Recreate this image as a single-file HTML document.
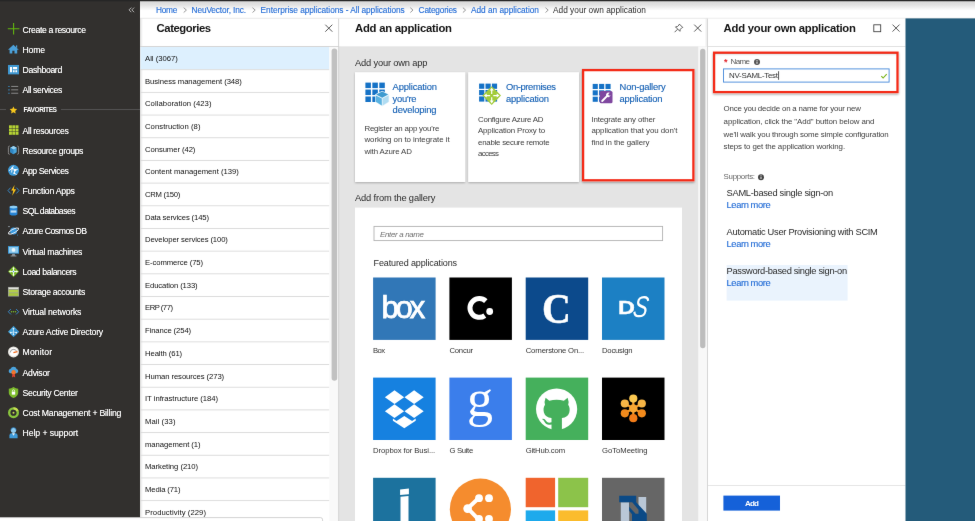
<!DOCTYPE html>
<html lang="en"><head><meta charset="utf-8"><title>Add your own application</title>
<style>
*{box-sizing:border-box;margin:0;padding:0}
html,body{width:975px;height:521px;overflow:hidden;background:#fff}
body{position:relative;font-family:"Liberation Sans",sans-serif;color:#333}
#app{position:absolute;left:0;top:0;width:975px;height:521px;overflow:hidden;background:#fff;will-change:transform;filter:url(#bl)}
#g{position:absolute;left:0;top:0}
.t{position:absolute;white-space:nowrap;display:block}
.sb{color:#fff;text-shadow:0 0 .5px rgba(255,255,255,.7)}
.fav{color:#fff;font-weight:bold}
.bc{color:#236cd6}
.dk{color:#2b2b2b}
.h{font-weight:bold;color:#141414}
.lt{color:#111}
.ct{color:#1560b4}
.cd{color:#404040}
.sec{color:#2a2a2a}
.lk{color:#236cd6}
.gl{color:#333}
.w{color:#fff}
.sf{font-family:"Liberation Serif",serif}
.bc,.lk,.ct{-webkit-text-stroke:.12px currentColor}
</style></head>
<body>
<div id="app">
<svg id="g" width="975" height="521" viewBox="0 0 975 521">
<defs><filter id="bl" x="0" y="0" width="100%" height="100%" color-interpolation-filters="sRGB"><feConvolveMatrix order="3" kernelMatrix="1 16 1 16 300 16 1 16 1" divisor="368" edgeMode="duplicate" preserveAlpha="true"/></filter><linearGradient id="cg" x1="0" y1="0" x2="0" y2="1"><stop offset="0" stop-color="#f2f2f2"/><stop offset=".06" stop-color="#dadada"/><stop offset=".22" stop-color="#e2e2e2"/><stop offset=".55" stop-color="#fff"/><stop offset="1" stop-color="#fff"/></linearGradient><linearGradient id="lsh" x1="0" y1="0" x2="1" y2="0"><stop offset="0" stop-color="#000" stop-opacity=".12"/><stop offset="1" stop-color="#000" stop-opacity="0"/></linearGradient><linearGradient id="rsh" x1="0" y1="0" x2="1" y2="0"><stop offset="0" stop-color="#000" stop-opacity="0"/><stop offset="1" stop-color="#000" stop-opacity=".09"/></linearGradient><linearGradient id="ish" x1="0" y1="0" x2="0" y2="1"><stop offset="0" stop-color="#000" stop-opacity=".13"/><stop offset="1" stop-color="#000" stop-opacity="0"/></linearGradient><filter id="sh" x="-10%" y="-10%" width="120%" height="125%"><feDropShadow dx="0" dy="1" stdDeviation=".9" flood-color="#000" flood-opacity=".26"/></filter><filter id="sh2" x="-10%" y="-10%" width="120%" height="125%"><feDropShadow dx="0" dy="1.2" stdDeviation="1.1" flood-color="#000" flood-opacity=".38"/></filter></defs>
<rect x="140" y="1" width="835" height="17.6" fill="url(#cg)"/>
<rect x="140" y="17.8" width="835" height="0.9" fill="#e6e6e6"/>
<rect x="0" y="0" width="140" height="521" fill="#32302e"/>
<rect x="0" y="0" width="975" height="1.3" fill="#262626"/>
<rect x="0" y="109" width="6" height="0.8" fill="#5a5a5a"/>
<rect x="61" y="109" width="79" height="0.8" fill="#5a5a5a"/>
<g transform="translate(8 22.9)"><path d="M5.6 0v11.6M-.2 5.8h11.6" stroke="#62b50f" stroke-width="1.1" fill="none"/></g>
<g transform="translate(8 44.08)"><path d="M5.4.6 10.8 5.6H9.2V9.4H6.5V6.6H4.3V9.4H1.6V5.6H0Z" fill="#4ba0d8"/><rect x="8" y="1.3" width="1.2" height="2.4" fill="#4ba0d8"/></g>
<g transform="translate(8 64.06)"><rect x="0" y=".9" width="11" height="9.4" fill="#3f98d2"/><path d="M2 2.9h2v5.4H2zM4.9 2.9h4.2v2.3H4.9zM4.9 6.1h1.7v2.2H4.9zM7.4 6.1h1.7v2.2H7.4z" fill="#fff"/></g>
<g transform="translate(8 84.24)"><path d="M.3 2.2h1.3M.3 5.6h1.3M.3 9h1.3" stroke="#3a8fc8" stroke-width="1.1"/><path d="M3.2 2.2h7M3.2 5.6h7M3.2 9h7" stroke="#8a8a8a" stroke-width="1"/></g>
<g transform="translate(8 104.52)"><path d="M5.4 1.9 6.5 4.3 9.1 4.6 7.2 6.4 7.7 9 5.4 7.7 3.1 9 3.6 6.4 1.7 4.6 4.3 4.3Z" fill="#f6c61c"/></g>
<g transform="translate(8 124.5)"><rect x="1.0" y="0.8" width="2.9" height="2.9" fill="#b5d334"/><rect x="4.3" y="0.8" width="2.9" height="2.9" fill="#b5d334"/><rect x="7.6" y="0.8" width="2.9" height="2.9" fill="#b5d334"/><rect x="1.0" y="4.1" width="2.9" height="2.9" fill="#b5d334"/><rect x="4.3" y="4.1" width="2.9" height="2.9" fill="#b5d334"/><rect x="7.6" y="4.1" width="2.9" height="2.9" fill="#b5d334"/><rect x="1.0" y="7.4" width="2.9" height="2.9" fill="#b5d334"/><rect x="4.3" y="7.4" width="2.9" height="2.9" fill="#b5d334"/><rect x="7.6" y="7.4" width="2.9" height="2.9" fill="#b5d334"/></g>
<g transform="translate(8 144.68)"><path d="M1.7 1.3Q.2 1.3.4 3V8Q.2 9.7 1.7 9.7M9.3 1.3Q10.8 1.3 10.6 3V8Q10.8 9.7 9.3 9.7" fill="none" stroke="#9a9a9a" stroke-width=".8"/><path d="M5.5 1.4 8.7 3.1V7.6L5.5 9.5 2.3 7.6V3.1Z" fill="#49a5dc"/><path d="M5.5 1.4 8.7 3.1 5.5 4.9 2.3 3.1Z" fill="#9bd3f2"/><path d="M5.5 4.9V9.5L2.3 7.6V3.1Z" fill="#2f86c4"/></g>
<g transform="translate(8 164.86)"><circle cx="5.5" cy="5.5" r="5.5" fill="#3d9bd9"/><path d="M1 5.8 4.2 3.4 5.4 1M4.2 3.4 7 5.2 9.8 4.4M7 5.2 6.2 8.4 8.6 9.6M4.2 3.4 3.6 7.6" stroke="#fff" stroke-width=".9" fill="none"/><circle cx="4.2" cy="3.4" r="1.1" fill="#fff"/><circle cx="7" cy="5.3" r="1.2" fill="#fff"/><circle cx="6.2" cy="8.3" r=".9" fill="#fff"/></g>
<g transform="translate(8 185.04)"><path d="M2.6 2.6 0 5.5 2.6 8.4M8.4 2.6 11 5.5 8.4 8.4" fill="none" stroke="#3a8fd0" stroke-width=".9"/><path d="M6.6 0 3.2 5.4H5.3L4.2 10.8 8.1 4.3H5.8Z" fill="#fcc419"/></g>
<g transform="translate(8 205.22)"><path d="M1.6 1.8Q5.5-.6 9.4 1.8V9.2Q5.5 11.6 1.6 9.2Z" fill="#2785d6"/><ellipse cx="5.5" cy="1.9" rx="3.9" ry="1.4" fill="#8fd0f5"/><rect x="2.6" y="5.2" width="5.8" height="2.2" fill="#d7ecfa" opacity=".85"/></g>
<g transform="translate(8 225.4)"><circle cx="5.6" cy="5.6" r="3.5" fill="#3b9be0"/><path d="M.6 8.6Q-.6 6.8 4.2 4.2 9 1.8 10.6 2.8" fill="none" stroke="#e8eef4" stroke-width="1"/><path d="M10.6 2.8Q11.4 4.4 7 7 2.4 9.6.6 8.6" fill="none" stroke="#e8eef4" stroke-width="1"/><circle cx="1" cy="1.2" r=".6" fill="#cfe2f2"/><circle cx="9.6" cy="9.6" r=".5" fill="#3b9be0"/></g>
<g transform="translate(8 245.68)"><rect x="0" y=".4" width="11" height="7.6" fill="#3f9bd8"/><rect x="1" y="1.3" width="9" height="5.8" fill="#8fcbee"/><circle cx="5.5" cy="4.2" r="1.9" fill="#e9f5fc"/><path d="M4.3 8h2.4l.5 1.8H3.8ZM2.6 9.8h5.8v.9H2.6Z" fill="#8a8f94"/></g>
<g transform="translate(8 266.06)"><path d="M5.5 0 11 5.5 5.5 11 0 5.5Z" fill="#7ab929"/><path d="M5.5 1.8V9.2M1.8 5.5H9.2" stroke="#fff" stroke-width=".9"/><path d="M5.5 1 6.7 2.6H4.3ZM5.5 10 6.7 8.4H4.3ZM1 5.5 2.6 4.3V6.7ZM10 5.5 8.4 4.3V6.7Z" fill="#fff"/><circle cx="5.5" cy="5.5" r="1.2" fill="#fff"/><circle cx="5.5" cy="5.5" r=".7" fill="#4aa0d8"/></g>
<g transform="translate(8 286.14)"><rect x="0" y=".8" width="11" height="9.6" fill="#9a9c96"/><rect x=".7" y="1.5" width="9.6" height="1.3" fill="#e6e6e0"/><rect x=".7" y="3.7" width="9.6" height="2.6" fill="#b4cf4a"/><rect x=".7" y="7" width="9.6" height="2.7" fill="#a9c640"/></g>
<g transform="translate(8 306.22)"><path d="M2.9 2.8.3 5.5 2.9 8.2M8.1 2.8 10.7 5.5 8.1 8.2" fill="none" stroke="#3a8fd0" stroke-width=".9"/><circle cx="3.5" cy="5.5" r=".75" fill="#7ab929"/><circle cx="5.5" cy="5.5" r=".75" fill="#7ab929"/><circle cx="7.5" cy="5.5" r=".75" fill="#7ab929"/></g>
<g transform="translate(8 326)"><path d="M5.5 0 11 5.7 5.5 11 0 5.7Z" fill="#46a5dc"/><path d="M5.5 0 11 5.7 5.5 11Z" fill="#3592cf"/><path d="M5.5 2.4V8.4M5.5 6 2.6 6.6M5.5 6 8.4 6.6" stroke="#d9eefa" stroke-width=".7"/><circle cx="5.5" cy="2.6" r=".9" fill="#e6f4fc"/><circle cx="2.7" cy="6.6" r=".9" fill="#e6f4fc"/><circle cx="8.3" cy="6.6" r=".9" fill="#e6f4fc"/><circle cx="5.5" cy="8.4" r=".8" fill="#e6f4fc"/></g>
<g transform="translate(8 346.38)"><circle cx="5.5" cy="5.5" r="5.5" fill="#e8e6e1"/><circle cx="5.5" cy="5.5" r="4.1" fill="#fff"/><path d="M2.2 6.2A3.4 3.4 0 0 1 8.8 5.2" fill="none" stroke="#8a8a8a" stroke-width=".8"/><path d="M5.4 6.2 9.4 5.2" stroke="#f36a1d" stroke-width="1.3"/></g>
<g transform="translate(8 366.66)"><path d="M2.4 6.6A2.3 2.3 0 0 1 2.6 2.1 3.2 3.2 0 0 1 8.6 2.4 2.2 2.2 0 0 1 8.8 6.6Z" fill="#4aa3dd"/><circle cx="5.6" cy="5.6" r="2.2" fill="#f0752b"/><path d="M4.4 7.4 4 10.8 5.6 9.8 7.2 10.8 6.8 7.4Z" fill="#e0452f"/></g>
<g transform="translate(8 387.04)"><path d="M5.5 0Q7.8 1.5 10.2 1.6V6.2Q9.6 9.4 5.5 11 1.4 9.4.8 6.2V1.6Q3.2 1.5 5.5 0Z" fill="#7dbb2c"/><rect x="3.8" y="4.6" width="3.4" height="3" fill="#fff"/><path d="M4.4 4.6V3.8A1.1 1.1 0 0 1 6.6 3.8V4.6" fill="none" stroke="#fff" stroke-width=".7"/></g>
<g transform="translate(8 407.22)"><circle cx="5.5" cy="5.5" r="5.5" fill="#8ac53e"/><circle cx="5.5" cy="5.5" r="3.1" fill="#32302e"/><path d="M5.5 0A5.5 5.5 0 0 1 10.6 3.4L8.4 4.4A3.1 3.1 0 0 0 5.5 2.4Z" fill="#c6df52"/><circle cx="5.5" cy="5.5" r="1" fill="#c6df52"/></g>
<g transform="translate(8 427.3)"><circle cx="5.5" cy="3" r="2.6" fill="#8ecbef"/><path d="M1.4 11V8.2Q1.4 6 3.6 6H7.4Q9.6 6 9.6 8.2V11Z" fill="#3f9bd8"/><path d="M4 6 5.5 8.4 7 6Z" fill="#e6f3fb"/><path d="M2.8 3A2.7 2.7 0 0 1 8.2 3" fill="none" stroke="#2d7fbf" stroke-width=".8"/></g>
<g transform="translate(128.5 7.3)"><path d="M2.8.3.5 2.6 2.8 4.9M5.6.3 3.3 2.6 5.6 4.9" fill="none" stroke="#d0d0d0" stroke-width=".8"/></g>
<g transform="translate(183.4 7.4)"><path d="M.3.3 3 2.7.3 5.1" fill="none" stroke="#808080" stroke-width=".8"/></g>
<g transform="translate(252.2 7.4)"><path d="M.3.3 3 2.7.3 5.1" fill="none" stroke="#808080" stroke-width=".8"/></g>
<g transform="translate(410 7.4)"><path d="M.3.3 3 2.7.3 5.1" fill="none" stroke="#808080" stroke-width=".8"/></g>
<g transform="translate(462.6 7.4)"><path d="M.3.3 3 2.7.3 5.1" fill="none" stroke="#808080" stroke-width=".8"/></g>
<g transform="translate(545.2 7.4)"><path d="M.3.3 3 2.7.3 5.1" fill="none" stroke="#808080" stroke-width=".8"/></g>
<rect x="140" y="18.7" width="3" height="503" fill="url(#lsh)"/>
<g transform="translate(325 24.4)"><path d="M.3.3l7 7M7.3.3l-7 7" stroke="#3a3a3a" stroke-width=".85" fill="none"/></g>
<rect x="140.6" y="46.9" width="188.8" height="22.5" fill="#ddf0fe"/>
<rect x="140" y="46.1" width="199" height="0.9" fill="#d2d2d2"/>
<rect x="140.6" y="69.25" width="188.8" height="0.9" fill="#dadada"/>
<rect x="140.6" y="91.93" width="188.8" height="0.9" fill="#dadada"/>
<rect x="140.6" y="114.61" width="188.8" height="0.9" fill="#dadada"/>
<rect x="140.6" y="137.29" width="188.8" height="0.9" fill="#dadada"/>
<rect x="140.6" y="159.97" width="188.8" height="0.9" fill="#dadada"/>
<rect x="140.6" y="182.65" width="188.8" height="0.9" fill="#dadada"/>
<rect x="140.6" y="205.33" width="188.8" height="0.9" fill="#dadada"/>
<rect x="140.6" y="228.01" width="188.8" height="0.9" fill="#dadada"/>
<rect x="140.6" y="250.69" width="188.8" height="0.9" fill="#dadada"/>
<rect x="140.6" y="273.37" width="188.8" height="0.9" fill="#dadada"/>
<rect x="140.6" y="296.05" width="188.8" height="0.9" fill="#dadada"/>
<rect x="140.6" y="318.73" width="188.8" height="0.9" fill="#dadada"/>
<rect x="140.6" y="341.41" width="188.8" height="0.9" fill="#dadada"/>
<rect x="140.6" y="364.09" width="188.8" height="0.9" fill="#dadada"/>
<rect x="140.6" y="386.77" width="188.8" height="0.9" fill="#dadada"/>
<rect x="140.6" y="409.45" width="188.8" height="0.9" fill="#dadada"/>
<rect x="140.6" y="432.13" width="188.8" height="0.9" fill="#dadada"/>
<rect x="140.6" y="454.81" width="188.8" height="0.9" fill="#dadada"/>
<rect x="140.6" y="477.49" width="188.8" height="0.9" fill="#dadada"/>
<rect x="140.6" y="500.17" width="188.8" height="0.9" fill="#dadada"/>
<rect x="140.6" y="522.85" width="188.8" height="0.9" fill="#dadada"/>
<rect x="329.4" y="47" width="9" height="474" fill="#f9f9f9"/>
<rect x="331.6" y="48.4" width="5.6" height="332.4" fill="#c1c1c1" rx="2.8"/>
<rect x="339" y="46.3" width="369" height="475" fill="#e4e4e4"/>
<rect x="338.2" y="18.7" width="0.9" height="503" fill="#d0d0d0"/>
<g transform="translate(674.2 23.6)"><path d="M5.2.5 8.5 3.8 7.6 4.2 6.1 5.7 5.7 7.7 1.3 3.3 3.3 2.9 4.8 1.4ZM3.4 5.6.4 8.6" fill="none" stroke="#3a3a3a" stroke-width=".8" stroke-linejoin="round"/></g>
<g transform="translate(693.9 24.3)"><path d="M.3.3l7 7M7.3.3l-7 7" stroke="#3a3a3a" stroke-width=".85" fill="none"/></g>
<rect x="355" y="72.2" width="110.2" height="109.8" fill="#fff" filter="url(#sh)"/>
<rect x="468.2" y="72.2" width="110.8" height="109.8" fill="#fff" filter="url(#sh)"/>
<rect x="582" y="69" width="112.5" height="112.4" fill="#fff" filter="url(#sh2)"/>
<rect x="583.1" y="70.1" width="110.3" height="110.2" fill="#fff" stroke="#f42a17" stroke-width="2.3"/>
<g transform="translate(365 82)"><rect x="0.40" y="0.60" width="5.5" height="5.5" fill="#1572c6"/><rect x="7.35" y="0.60" width="5.5" height="5.5" fill="#1572c6"/><rect x="14.30" y="0.60" width="5.5" height="5.5" fill="#1572c6"/><rect x="0.40" y="7.55" width="5.5" height="5.5" fill="#1572c6"/><rect x="7.35" y="7.55" width="5.5" height="5.5" fill="#1572c6"/><rect x="14.30" y="7.55" width="5.5" height="5.5" fill="#1572c6"/><rect x="0.40" y="14.50" width="5.5" height="5.5" fill="#1572c6"/><rect x="7.35" y="14.50" width="5.5" height="5.5" fill="#1572c6"/><rect x="14.30" y="14.50" width="5.5" height="5.5" fill="#1572c6"/><path d="M17.2 8.8 24.2 12.2V20L17.2 24.6 10.2 20V12.2Z" fill="#eaf6fc"/><path d="M17.2 9.6 23.2 12.6 17.2 15.8 11.2 12.6Z" fill="#3f9bd0"/><path d="M10.8 13.4 16.8 16.6V23.6L10.8 19.8Z" fill="#5ab2e0"/><path d="M23.6 13.4 17.6 16.6V23.6L23.6 19.8Z" fill="#b0dcf2"/></g>
<g transform="translate(479 83)"><rect x="0.10" y="0.60" width="5.2" height="5.2" fill="#1572c6"/><rect x="6.50" y="0.60" width="5.2" height="5.2" fill="#1572c6"/><rect x="12.90" y="0.60" width="5.2" height="5.2" fill="#1572c6"/><rect x="0.10" y="7.00" width="5.2" height="5.2" fill="#1572c6"/><rect x="6.50" y="7.00" width="5.2" height="5.2" fill="#1572c6"/><rect x="12.90" y="7.00" width="5.2" height="5.2" fill="#1572c6"/><rect x="0.10" y="13.40" width="5.2" height="5.2" fill="#1572c6"/><rect x="6.50" y="13.40" width="5.2" height="5.2" fill="#1572c6"/><rect x="12.90" y="13.40" width="5.2" height="5.2" fill="#1572c6"/><path d="M12.7 3.3 22 12.6 12.7 21.9 3.4 12.6Z" fill="#a2cb3a"/><path d="M12.7 6.4V11M12.7 14.2V18.8M6.5 12.6H11.1M14.3 12.6H18.9" stroke="#fff" stroke-width="1.2"/><path d="M12.7 4.8 14.7 7.6H10.7ZM12.7 20.4 14.7 17.6H10.7ZM4.9 12.6 7.7 10.6V14.6ZM20.5 12.6 17.7 10.6V14.6Z" fill="#fff"/></g>
<g transform="translate(592.6 83)"><rect x="0.10" y="0.90" width="5.1" height="5.1" fill="#1572c6"/><rect x="6.50" y="0.90" width="5.1" height="5.1" fill="#1572c6"/><rect x="12.90" y="0.90" width="5.1" height="5.1" fill="#1572c6"/><rect x="0.10" y="7.30" width="5.1" height="5.1" fill="#1572c6"/><rect x="6.50" y="7.30" width="5.1" height="5.1" fill="#1572c6"/><rect x="12.90" y="7.30" width="5.1" height="5.1" fill="#1572c6"/><rect x="0.10" y="13.70" width="5.1" height="5.1" fill="#1572c6"/><rect x="6.50" y="13.70" width="5.1" height="5.1" fill="#1572c6"/><rect x="12.90" y="13.70" width="5.1" height="5.1" fill="#1572c6"/><rect x="7.1" y="7.9" width="12.8" height="12.4" rx="1.5" fill="#7f479f"/><path d="M9.6 18 14.6 12.8" stroke="#fff" stroke-width="1.9" stroke-linecap="round"/><path d="M13.4 12A2.7 2.7 0 0 1 17.2 9.7L15.6 11.3 16.4 12.8 18 12.2A2.7 2.7 0 0 1 14 13.8Z" fill="#fff"/></g>
<rect x="355" y="207.6" width="327" height="314" fill="#fff"/>
<rect x="374" y="226.4" width="288.6" height="14.2" fill="#fff" stroke="#b2b2b2" stroke-width=".9"/>
<g transform="translate(373.1 277.5)"><rect width="62.5" height="62.4" fill="#3177b7"/></g>
<g transform="translate(449.4 277.5)"><rect width="62.5" height="62.4" fill="#000"/><path d="M36.4 23.6A9.4 9.4 0 1 0 35.4 38.1" fill="none" stroke="#fff" stroke-width="5"/><circle cx="40.3" cy="34" r="3.4" fill="#fff"/></g>
<g transform="translate(525.7 277.5)"><rect width="62.5" height="62.4" fill="#0c4a8c"/></g>
<g transform="translate(602 277.5)"><rect width="62.5" height="62.4" fill="#1c80c4"/></g>
<g transform="translate(373.1 377.6)"><rect width="62.5" height="62.4" fill="#1681e0"/><path d="M21.4 12.7 31.0 19.6 21.4 26.5 11.8 19.6ZM41.0 12.7 50.6 19.6 41.0 26.5 31.4 19.6ZM21.4 26.7 31.0 33.6 21.4 40.5 11.8 33.6ZM41.0 26.7 50.6 33.6 41.0 40.5 31.4 33.6Z" fill="#fff"/><path d="M31.2 38.4 39 43.4 42.6 41V43.2L31.2 50.6 19.8 43.2V41L23.4 43.4Z" fill="#fff"/></g>
<g transform="translate(449.4 377.6)"><rect width="62.5" height="62.4" fill="#3b7eeb"/></g>
<g transform="translate(525.7 377.6)"><rect width="62.5" height="62.4" fill="#45b05c"/><circle cx="30.9" cy="31.5" r="20.6" fill="#fff"/><path d="M19.9 20.2 23.6 23.2Q30.9 21.2 38.2 23.2L41.9 20.2Q43.5 24.2 42.5 27.2 44.7 30.4 43.6 34.8 42.2 39.6 36.2 40.4V52.6H25.8V46.8Q20.8 48.4 18.8 44.2 17.8 42 16.2 41.4 19 40.6 20.4 43.4 22.2 46 25.8 44.6V40.4Q19.6 39.6 18.2 34.8 17.1 30.4 19.3 27.2 18.3 24.2 19.9 20.2Z" fill="#45b05c"/></g>
<g transform="translate(602 377.6)"><rect width="62.5" height="62.4" fill="#000"/><path d="M31.3 30.8 31.3 21.0" stroke="#f59a2a" stroke-width="2.2"/><path d="M31.3 30.8 39.8 25.9" stroke="#f59a2a" stroke-width="2.2"/><path d="M31.3 30.8 39.8 35.7" stroke="#f59a2a" stroke-width="2.2"/><path d="M31.3 30.8 31.3 40.6" stroke="#f59a2a" stroke-width="2.2"/><path d="M31.3 30.8 22.8 35.7" stroke="#f59a2a" stroke-width="2.2"/><path d="M31.3 30.8 22.8 25.9" stroke="#f59a2a" stroke-width="2.2"/><circle cx="31.3" cy="21.0" r="4.1" fill="#fbc850"/><circle cx="39.8" cy="25.9" r="4.1" fill="#f7b546"/><circle cx="39.8" cy="35.7" r="4.1" fill="#f28a1c"/><circle cx="31.3" cy="40.6" r="4.1" fill="#f27c18"/><circle cx="22.8" cy="35.7" r="4.1" fill="#f28a1c"/><circle cx="22.8" cy="25.9" r="4.1" fill="#f7b546"/><circle cx="31.3" cy="30.8" r="4.2" fill="#f8a733"/></g>
<g transform="translate(373.1 477.8)"><rect width="62.5" height="62.4" fill="#1c729e"/><path d="M27 11.6 35.8 10.8V16.4L27 17.2ZM27.4 19 35.4 18.2V62.4H27.4Z" fill="#fff"/></g>
<g transform="translate(449.4 477.8)"><circle cx="31" cy="31.4" r="30.6" fill="#f58c2e"/><path d="M28.6 21 18.4 30.6 28.6 41" fill="none" stroke="#fff" stroke-width="4"/><circle cx="29.6" cy="20.4" r="3.9" fill="#fff"/><circle cx="39.6" cy="20.4" r="3.9" fill="#fff"/><circle cx="18.2" cy="30.8" r="4.3" fill="#fff"/><circle cx="29.6" cy="41" r="3.9" fill="#fff"/><circle cx="39.6" cy="41" r="3.9" fill="#fff"/></g>
<g transform="translate(525.7 477.8)"><rect width="29.4" height="29.4" fill="#f0642d"/><rect x="32.5" width="30" height="29.4" fill="#8cc34a"/><rect y="32.6" width="29.4" height="30" fill="#1eaaec"/><rect x="32.5" y="32.6" width="30" height="30" fill="#fbbc2d"/></g>
<g transform="translate(602 477.8)"><rect width="62.5" height="62.4" fill="#666"/><path d="M18.8 24.4H27.2V44H18.8ZM36.5 19.2H44.2V36H36.5Z" fill="#b9c7d6"/><path d="M17.2 18H34.2V24.5L44.8 36V44H30V36.4L27.2 33V24.5H17.2Z" fill="#0b4a86"/><path d="M27.2 24.5H30.2L36.5 32V36H33.6L27.2 29Z" fill="#666"/></g>
<rect x="698.2" y="46.3" width="9" height="475" fill="#f8f8f8"/>
<rect x="700.1" y="48.8" width="5.3" height="299.4" fill="#bdbdbd" rx="2.6"/>
<rect x="707.9" y="18.7" width="197.6" height="503" fill="#fff"/>
<rect x="704.4" y="18.7" width="3" height="27.6" fill="url(#rsh)"/>
<rect x="707" y="18.7" width="0.9" height="503" fill="#d4d4d4"/>
<rect x="707.9" y="46.1" width="197.6" height="0.9" fill="#dedede"/>
<rect x="873.8" y="24.8" width="6.9" height="6.9" fill="none" stroke="#3a3a3a" stroke-width=".85"/>
<g transform="translate(892.2 24.3)"><path d="M.3.3l7 7M7.3.3l-7 7" stroke="#3a3a3a" stroke-width=".85" fill="none"/></g>
<rect x="713" y="51.6" width="185.6" height="41.6" fill="#fff" filter="url(#sh2)"/>
<rect x="714.1" y="52.7" width="183.4" height="39.4" fill="#fff" stroke="#f42a17" stroke-width="2.3"/>
<rect x="715" y="53.6" width="181.6" height="2.4" fill="url(#ish)"/>
<g transform="translate(754 59)"><circle cx="3" cy="3" r="3" fill="#555"/><rect x="2.55" y="2.5" width=".9" height="2.3" fill="#fff"/><rect x="2.55" y="1.1" width=".9" height=".9" fill="#fff"/></g>
<rect x="723.5" y="68.9" width="165.6" height="13.2" fill="#fff" stroke="#4f8fdc" stroke-width=".95"/>
<rect x="778.3" y="71.2" width="0.75" height="8.6" fill="#222"/>
<g transform="translate(880.8 73.6)"><path d="M.5 2.6 2.3 4.4 5.9.5" fill="none" stroke="#7ab317" stroke-width="1.1"/></g>
<g transform="translate(758 174.2)"><circle cx="3" cy="3" r="3" fill="#444"/><rect x="2.55" y="2.5" width=".9" height="2.3" fill="#fff"/><rect x="2.55" y="1.1" width=".9" height=".9" fill="#fff"/></g>
<rect x="726.6" y="265" width="121" height="35.6" fill="#eaf3fd"/>
<rect x="707.9" y="485" width="197.6" height="0.9" fill="#e2e2e2"/>
<rect x="723.4" y="495.6" width="56.6" height="15" fill="#1561d9"/>
<rect x="905.5" y="18.4" width="69.5" height="503" fill="#245b7a"/>
<path d="M-1 517.6H320.4Q322.6 517.6 322.6 519.8V522H-1Z" fill="#fff" stroke="#c6c6c6" stroke-width=".8"/>
</svg>
<span class="t sb" style="left:22.6px;top:23px;font-size:8.7px;line-height:14px;letter-spacing:-0.38px;">Create a resource</span>
<span class="t sb" style="left:22.6px;top:43px;font-size:8.7px;line-height:14px;letter-spacing:-0.26px;">Home</span>
<span class="t sb" style="left:22.6px;top:63px;font-size:8.7px;line-height:14px;letter-spacing:-0.36px;">Dashboard</span>
<span class="t sb" style="left:22.6px;top:83px;font-size:8.7px;line-height:14px;letter-spacing:-0.39px;">All services</span>
<span class="t fav" style="left:23.5px;top:104px;font-size:6.6px;line-height:11px;letter-spacing:-0.42px;">FAVORITES</span>
<span class="t sb" style="left:22.6px;top:124px;font-size:8.7px;line-height:14px;letter-spacing:-0.34px;">All resources</span>
<span class="t sb" style="left:22.6px;top:144px;font-size:8.7px;line-height:14px;letter-spacing:-0.38px;">Resource groups</span>
<span class="t sb" style="left:22.6px;top:164px;font-size:8.7px;line-height:14px;letter-spacing:-0.44px;">App Services</span>
<span class="t sb" style="left:22.6px;top:184px;font-size:8.7px;line-height:14px;letter-spacing:-0.23px;">Function Apps</span>
<span class="t sb" style="left:22.6px;top:204px;font-size:8.7px;line-height:14px;letter-spacing:-0.55px;">SQL databases</span>
<span class="t sb" style="left:22.6px;top:224px;font-size:8.7px;line-height:14px;letter-spacing:-0.5px;">Azure Cosmos DB</span>
<span class="t sb" style="left:22.6px;top:245px;font-size:8.7px;line-height:14px;letter-spacing:-0.28px;">Virtual machines</span>
<span class="t sb" style="left:22.6px;top:265px;font-size:8.7px;line-height:14px;letter-spacing:-0.41px;">Load balancers</span>
<span class="t sb" style="left:22.6px;top:285px;font-size:8.7px;line-height:14px;letter-spacing:-0.33px;">Storage accounts</span>
<span class="t sb" style="left:22.6px;top:305px;font-size:8.7px;line-height:14px;letter-spacing:-0.19px;">Virtual networks</span>
<span class="t sb" style="left:22.6px;top:325px;font-size:8.7px;line-height:14px;letter-spacing:-0.23px;">Azure Active Directory</span>
<span class="t sb" style="left:22.6px;top:345px;font-size:8.7px;line-height:14px;letter-spacing:0.09px;">Monitor</span>
<span class="t sb" style="left:22.6px;top:366px;font-size:8.7px;line-height:14px;letter-spacing:-0.29px;">Advisor</span>
<span class="t sb" style="left:22.6px;top:386px;font-size:8.7px;line-height:14px;letter-spacing:-0.33px;">Security Center</span>
<span class="t sb" style="left:22.6px;top:406px;font-size:8.7px;line-height:14px;letter-spacing:-0.22px;">Cost Management + Billing</span>
<span class="t sb" style="left:22.6px;top:426px;font-size:8.7px;line-height:14px;letter-spacing:-0.09px;">Help + support</span>
<span class="t bc" style="left:156px;top:3px;font-size:8.3px;line-height:14px;letter-spacing:-0.25px;">Home</span>
<span class="t bc" style="left:191.6px;top:3px;font-size:8.3px;line-height:14px;letter-spacing:-0.13px;">NeuVector, Inc.</span>
<span class="t bc" style="left:260.6px;top:3px;font-size:8.3px;line-height:14px;letter-spacing:-0.05px;">Enterprise applications - All applications</span>
<span class="t bc" style="left:418.6px;top:3px;font-size:8.3px;line-height:14px;letter-spacing:-0.19px;">Categories</span>
<span class="t bc" style="left:471px;top:3px;font-size:8.3px;line-height:14px;letter-spacing:-0.02px;">Add an application</span>
<span class="t dk" style="left:553px;top:3px;font-size:8.3px;line-height:14px;letter-spacing:0.01px;">Add your own application</span>
<span class="t h" style="left:156.6px;top:20px;font-size:11.3px;line-height:16px;letter-spacing:-0.44px;">Categories</span>
<span class="t lt" style="left:145px;top:52px;font-size:7.7px;line-height:13px;">All (3067)</span>
<span class="t lt" style="left:145px;top:75px;font-size:7.7px;line-height:13px;letter-spacing:-0.06px;">Business management (348)</span>
<span class="t lt" style="left:145px;top:97px;font-size:7.7px;line-height:13px;letter-spacing:0.06px;">Collaboration (423)</span>
<span class="t lt" style="left:145px;top:120px;font-size:7.7px;line-height:13px;letter-spacing:0.05px;">Construction (8)</span>
<span class="t lt" style="left:145px;top:143px;font-size:7.7px;line-height:13px;letter-spacing:-0.07px;">Consumer (42)</span>
<span class="t lt" style="left:145px;top:165px;font-size:7.7px;line-height:13px;letter-spacing:-0.01px;">Content management (139)</span>
<span class="t lt" style="left:145px;top:188px;font-size:7.7px;line-height:13px;letter-spacing:-0.27px;">CRM (150)</span>
<span class="t lt" style="left:145px;top:211px;font-size:7.7px;line-height:13px;letter-spacing:-0.15px;">Data services (145)</span>
<span class="t lt" style="left:145px;top:233px;font-size:7.7px;line-height:13px;letter-spacing:-0.11px;">Developer services (100)</span>
<span class="t lt" style="left:145px;top:256px;font-size:7.7px;line-height:13px;letter-spacing:-0.09px;">E-commerce (75)</span>
<span class="t lt" style="left:145px;top:279px;font-size:7.7px;line-height:13px;letter-spacing:-0.12px;">Education (133)</span>
<span class="t lt" style="left:145px;top:301px;font-size:7.7px;line-height:13px;letter-spacing:-0.5px;">ERP (77)</span>
<span class="t lt" style="left:145px;top:324px;font-size:7.7px;line-height:13px;letter-spacing:-0.11px;">Finance (254)</span>
<span class="t lt" style="left:145px;top:347px;font-size:7.7px;line-height:13px;letter-spacing:-0.09px;">Health (61)</span>
<span class="t lt" style="left:145px;top:370px;font-size:7.7px;line-height:13px;letter-spacing:-0.08px;">Human resources (273)</span>
<span class="t lt" style="left:145px;top:392px;font-size:7.7px;line-height:13px;letter-spacing:-0.03px;">IT infrastructure (184)</span>
<span class="t lt" style="left:145px;top:415px;font-size:7.7px;line-height:13px;letter-spacing:0.07px;">Mail (33)</span>
<span class="t lt" style="left:145px;top:438px;font-size:7.7px;line-height:13px;letter-spacing:-0.06px;">management (1)</span>
<span class="t lt" style="left:145px;top:460px;font-size:7.7px;line-height:13px;letter-spacing:-0.05px;">Marketing (210)</span>
<span class="t lt" style="left:145px;top:483px;font-size:7.7px;line-height:13px;letter-spacing:-0.13px;">Media (71)</span>
<span class="t lt" style="left:145px;top:506px;font-size:7.7px;line-height:13px;letter-spacing:0.07px;">Productivity (229)</span>
<span class="t h" style="left:355px;top:20px;font-size:11.3px;line-height:16px;letter-spacing:-0.24px;">Add an application</span>
<span class="t sec" style="left:355px;top:56px;font-size:9.3px;line-height:14px;letter-spacing:-0.17px;">Add your own app</span>
<span class="t ct" style="left:392.6px;top:79px;font-size:9.4px;line-height:15px;letter-spacing:-0.15px;">Application</span>
<span class="t ct" style="left:392.6px;top:91px;font-size:9.4px;line-height:15px;letter-spacing:-0.25px;">you're</span>
<span class="t ct" style="left:392.6px;top:102px;font-size:9.4px;line-height:15px;letter-spacing:-0.17px;">developing</span>
<span class="t cd" style="left:364.4px;top:122px;font-size:7.9px;line-height:13px;letter-spacing:-0.2px;">Register an app you're</span>
<span class="t cd" style="left:364.4px;top:133px;font-size:7.9px;line-height:13px;letter-spacing:-0.03px;">working on to integrate it</span>
<span class="t cd" style="left:364.4px;top:145px;font-size:7.9px;line-height:13px;letter-spacing:-0.13px;">with Azure AD</span>
<span class="t ct" style="left:506px;top:79px;font-size:9.4px;line-height:15px;letter-spacing:-0.37px;">On-premises</span>
<span class="t ct" style="left:506px;top:91px;font-size:9.4px;line-height:15px;letter-spacing:-0.18px;">application</span>
<span class="t cd" style="left:478px;top:113px;font-size:7.9px;line-height:13px;letter-spacing:-0.22px;">Configure Azure AD</span>
<span class="t cd" style="left:478px;top:124px;font-size:7.9px;line-height:13px;letter-spacing:-0.14px;">Application Proxy to</span>
<span class="t cd" style="left:478px;top:136px;font-size:7.9px;line-height:13px;letter-spacing:-0.25px;">enable secure remote</span>
<span class="t cd" style="left:478px;top:147px;font-size:7.9px;line-height:13px;letter-spacing:-0.71px;">access</span>
<span class="t ct" style="left:619.6px;top:79px;font-size:9.4px;line-height:15px;letter-spacing:-0.19px;">Non-gallery</span>
<span class="t ct" style="left:619.6px;top:91px;font-size:9.4px;line-height:15px;letter-spacing:-0.2px;">application</span>
<span class="t cd" style="left:591.4px;top:113px;font-size:7.9px;line-height:13px;letter-spacing:-0.12px;">Integrate any other</span>
<span class="t cd" style="left:591.4px;top:124px;font-size:7.9px;line-height:13px;letter-spacing:-0.04px;">application that you don't</span>
<span class="t cd" style="left:591.4px;top:136px;font-size:7.9px;line-height:13px;letter-spacing:-0.09px;">find in the gallery</span>
<span class="t sec" style="left:355px;top:191px;font-size:9.3px;line-height:14px;letter-spacing:-0.15px;">Add from the gallery</span>
<span class="t" style="left:380px;top:228px;font-size:7.9px;line-height:13px;letter-spacing:-0.31px;font-style:italic;color:#6e6e6e;">Enter a name</span>
<span class="t sec" style="left:373.6px;top:256px;font-size:9px;line-height:14px;letter-spacing:-0.13px;">Featured applications</span>
<span class="t w " style="left:381.4px;top:288px;font-size:31px;line-height:39px;letter-spacing:-3.1px;-webkit-text-stroke:.75px #fff;">box</span>
<span class="t w sf" style="left:541.7px;top:284px;font-size:42px;line-height:51px;font-weight:bold;transform:scaleX(.95);transform-origin:0 0;-webkit-text-stroke:.5px #fff;">C</span>
<span class="t w " style="left:618.4px;top:296px;font-size:18px;line-height:24px;font-weight:bold;transform:scaleX(1.3);transform-origin:0 0;-webkit-text-stroke:.3px #fff;">D</span>
<span class="t w " style="left:631.6px;top:288px;font-size:30px;line-height:37px;font-style:italic;transform:scaleX(.74) skewX(-12deg);transform-origin:0 80%;">S</span>
<span class="t w sf" style="left:467px;top:367px;font-size:53px;line-height:63px;transform:scaleX(.98);transform-origin:0 0;">g</span>
<span class="t gl" style="left:373.1px;top:344px;font-size:7.7px;line-height:13px;letter-spacing:-0.62px;">Box</span>
<span class="t gl" style="left:449.4px;top:344px;font-size:7.7px;line-height:13px;letter-spacing:-0.2px;">Concur</span>
<span class="t gl" style="left:525.7px;top:344px;font-size:7.7px;line-height:13px;letter-spacing:-0.17px;">Cornerstone On...</span>
<span class="t gl" style="left:602px;top:344px;font-size:7.7px;line-height:13px;letter-spacing:-0.21px;">Docusign</span>
<span class="t gl" style="left:373.1px;top:444px;font-size:7.7px;line-height:13px;letter-spacing:-0.09px;">Dropbox for Busi...</span>
<span class="t gl" style="left:449.4px;top:444px;font-size:7.7px;line-height:13px;letter-spacing:-0.31px;">G Suite</span>
<span class="t gl" style="left:525.7px;top:444px;font-size:7.7px;line-height:13px;letter-spacing:-0.13px;">GitHub.com</span>
<span class="t gl" style="left:602px;top:444px;font-size:7.7px;line-height:13px;letter-spacing:-0.03px;">GoToMeeting</span>
<span class="t h" style="left:723.6px;top:20px;font-size:11.3px;line-height:16px;letter-spacing:-0.25px;">Add your own application</span>
<span class="t" style="left:724px;top:55px;font-size:9px;line-height:14px;color:#e0242c;font-weight:bold;">*</span>
<span class="t" style="left:730.6px;top:55px;font-size:8px;line-height:13px;letter-spacing:-0.65px;color:#555;">Name</span>
<span class="t" style="left:729px;top:69px;font-size:7.9px;line-height:13px;letter-spacing:-0.25px;color:#333;">NV-SAML-Test</span>
<span class="t cd" style="left:723.6px;top:102px;font-size:7.9px;line-height:13px;letter-spacing:-0.19px;">Once you decide on a name for your new</span>
<span class="t cd" style="left:723.6px;top:115px;font-size:7.9px;line-height:13px;letter-spacing:-0.09px;">application, click the "Add" button below and</span>
<span class="t cd" style="left:723.6px;top:128px;font-size:7.9px;line-height:13px;letter-spacing:-0.12px;">we'll walk you through some simple configuration</span>
<span class="t cd" style="left:723.6px;top:140px;font-size:7.9px;line-height:13px;letter-spacing:-0.11px;">steps to get the application working.</span>
<span class="t" style="left:723.6px;top:170px;font-size:7.9px;line-height:13px;letter-spacing:-0.3px;color:#666;">Supports:</span>
<span class="t sec" style="left:726.6px;top:186px;font-size:9.3px;line-height:14px;letter-spacing:-0.3px;">SAML-based single sign-on</span>
<span class="t lk" style="left:726.6px;top:198px;font-size:9.3px;line-height:14px;letter-spacing:-0.39px;">Learn more</span>
<span class="t sec" style="left:726.6px;top:225px;font-size:9.3px;line-height:14px;letter-spacing:-0.29px;">Automatic User Provisioning with SCIM</span>
<span class="t lk" style="left:726.6px;top:237px;font-size:9.3px;line-height:14px;letter-spacing:-0.39px;">Learn more</span>
<span class="t sec" style="left:726.6px;top:264px;font-size:9.3px;line-height:14px;letter-spacing:-0.31px;">Password-based single sign-on</span>
<span class="t lk" style="left:726.6px;top:276px;font-size:9.3px;line-height:14px;letter-spacing:-0.39px;">Learn more</span>
<span class="t" style="left:745px;top:497px;font-size:8px;line-height:13px;letter-spacing:-0.78px;color:#fff;font-weight:bold;">Add</span>
</div>
</body></html>
